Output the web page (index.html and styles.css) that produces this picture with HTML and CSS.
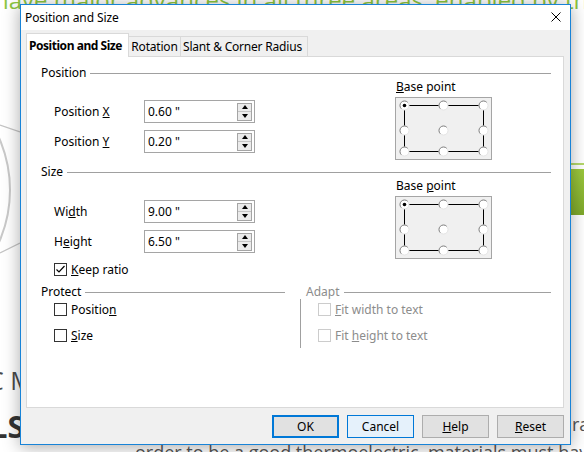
FILE: index.html
```html
<!DOCTYPE html>
<html>
<head>
<meta charset="utf-8">
<title>Position and Size</title>
<link rel="stylesheet" href="styles.css">
</head>
<body>
<div class="page">
  <p class="page-lead">have major advances in all three areas, enabled by the</p>
  <div class="page-mid">
    <svg class="page-figure" width="20" height="150" viewBox="0 0 20 150">
      <circle cx="-120" cy="70" r="130" fill="none" stroke="#c9c9c9" stroke-width="2"/>
      <line x1="0" y1="5" x2="20" y2="12" stroke="#c4c4c4" stroke-width="1.2"/>
      <line x1="0" y1="133" x2="20" y2="123" stroke="#c4c4c4" stroke-width="1.2"/>
    </svg>
    <div class="page-photo"></div>
  </div>
  <p class="page-h2">C M</p>
  <div class="page-row">
    <span class="page-h1">LS</span>
    <span class="page-side">rat</span>
  </div>
  <p class="page-body">order to be a good thermoelectric, materials must have the unique</p>
</div>

<div class="dialog">
  <div class="titlebar">
    <span class="title">Position and Size</span>
    <svg class="close" width="10" height="10" viewBox="0 0 10 10">
      <path d="M0.5 0.5 L9.5 9.5 M9.5 0.5 L0.5 9.5" stroke="#000" stroke-width="1" fill="none"/>
    </svg>
  </div>
  <div class="dlg-body">
    <div class="tabs">
      <div class="tab active">Position and Size</div>
      <div class="tab tab-rot">Rotation</div>
      <div class="tab tab-slant">Slant &amp; Corner Radius</div>
    </div>
    <div class="panel">
      <div class="section">
        <div class="sec-head"><span>Position</span><i class="rule"></i></div>
        <div class="sec-body">
          <div class="fields fields-1">
            <div class="field">
              <span class="lbl">Position <u>X</u></span>
              <div class="spin-input"><span class="val">0.60 "</span><span class="spin"><i class="up"></i><i class="down"></i></span></div>
            </div>
            <div class="field">
              <span class="lbl">Position <u>Y</u></span>
              <div class="spin-input"><span class="val">0.20 "</span><span class="spin"><i class="up"></i><i class="down"></i></span></div>
            </div>
          </div>
          <div class="basepoint">
            <div class="bp-label"><u>B</u>ase point</div>
            <div class="bp-box">
              <svg width="95" height="61" viewBox="0 0 95 61">
                <defs>
                  <g id="radio">
                    <circle cx="0" cy="0" r="4.5" fill="#fff" stroke="#e4e4e4" stroke-width="1"/>
                    <path d="M3.2 -3.2 A4.5 4.5 0 0 0 -3.2 3.2" fill="none" stroke="#858585" stroke-width="1"/>
                  </g>
                </defs>
                <path d="M8.5 7.5 H87.5 V53.5 H8.5 Z" fill="none" stroke="#000" stroke-width="1"/>
                <use href="#radio" x="8.5" y="7.5"/>
                <use href="#radio" x="47.5" y="7.5"/>
                <use href="#radio" x="87.5" y="7.5"/>
                <use href="#radio" x="8.5" y="32.5"/>
                <use href="#radio" x="47.5" y="32.5"/>
                <use href="#radio" x="87.5" y="32.5"/>
                <use href="#radio" x="8.5" y="53.5"/>
                <use href="#radio" x="47.5" y="53.5"/>
                <use href="#radio" x="87.5" y="53.5"/>
                <circle cx="8.5" cy="7.5" r="1.8" fill="#000"/>
              </svg>
            </div>
          </div>
        </div>
      </div>

      <div class="section section-2">
        <div class="sec-head"><span>Size</span><i class="rule"></i></div>
        <div class="sec-body">
          <div class="fields fields-2">
            <div class="field">
              <span class="lbl">Wi<u>d</u>th</span>
              <div class="spin-input"><span class="val">9.00 "</span><span class="spin"><i class="up"></i><i class="down"></i></span></div>
            </div>
            <div class="field">
              <span class="lbl">H<u>e</u>ight</span>
              <div class="spin-input"><span class="val">6.50 "</span><span class="spin"><i class="up"></i><i class="down"></i></span></div>
            </div>
            <div class="check keep">
              <span class="box">
                <svg width="11" height="11" viewBox="0 0 11 11"><path d="M1.5 5.5 L4 8 L9.5 2" fill="none" stroke="#000" stroke-width="1.2"/></svg>
              </span>
              <span class="clbl"><u>K</u>eep ratio</span>
            </div>
          </div>
          <div class="basepoint">
            <div class="bp-label">Base <u>p</u>oint</div>
            <div class="bp-box">
              <svg width="95" height="61" viewBox="0 0 95 61">
                <path d="M8.5 7.5 H87.5 V53.5 H8.5 Z" fill="none" stroke="#000" stroke-width="1"/>
                <use href="#radio" x="8.5" y="7.5"/>
                <use href="#radio" x="47.5" y="7.5"/>
                <use href="#radio" x="87.5" y="7.5"/>
                <use href="#radio" x="8.5" y="32.5"/>
                <use href="#radio" x="47.5" y="32.5"/>
                <use href="#radio" x="87.5" y="32.5"/>
                <use href="#radio" x="8.5" y="53.5"/>
                <use href="#radio" x="47.5" y="53.5"/>
                <use href="#radio" x="87.5" y="53.5"/>
                <circle cx="8.5" cy="7.5" r="1.8" fill="#000"/>
              </svg>
            </div>
          </div>
        </div>
      </div>

      <div class="section-3">
        <div class="protect">
          <div class="sec-head"><span>Protect</span><i class="rule"></i></div>
          <div class="checks">
            <div class="check"><span class="box"></span><span class="clbl">Positio<u>n</u></span></div>
            <div class="check"><span class="box"></span><span class="clbl"><u>S</u>ize</span></div>
          </div>
        </div>
        <div class="adapt">
          <div class="sec-head disabled"><span>Adapt</span><i class="rule"></i></div>
          <div class="checks adapt-body">
            <div class="check disabled"><span class="box"></span><span class="clbl"><u>F</u>it width to text</span></div>
            <div class="check disabled"><span class="box"></span><span class="clbl">Fit <u>h</u>eight to text</span></div>
          </div>
        </div>
      </div>
    </div>
    <div class="buttons">
      <button class="btn btn-default">OK</button>
      <button class="btn btn-hover">Cancel</button>
      <button class="btn"><u>H</u>elp</button>
      <button class="btn"><u>R</u>eset</button>
    </div>
  </div>
</div>
</body>
</html>
```

FILE: styles.css
```css
* { box-sizing: border-box; }

body {
  margin: 0;
  width: 584px;
  height: 452px;
  overflow: hidden;
  position: relative;
  background: #fff;
  font-family: "Noto Sans", "Open Sans", sans-serif;
  font-size: 12px;
  color: #000;
}

/* ---------- background page ---------- */
.page {
  width: 584px;
  height: 452px;
  overflow: hidden;
}
.page p { margin: 0; }

.page-lead {
  margin: -12px 0 0 -6px !important;
  font: 24px/24px "Open Sans", sans-serif;
  color: #8dc63f;
  white-space: nowrap;
}

.page-mid {
  display: flex;
  justify-content: space-between;
  align-items: flex-start;
  margin-top: 108px;
  height: 150px;
}
.page-figure { display: block; }
.page-photo {
  width: 13px;
  height: 52px;
  margin-top: 43px;
  background: linear-gradient(#b5d86a 0 2px, #fff 2px 6px, #9cc83d 6px, #7ea82b);
}

.page-h2 {
  margin: 95px 0 0 -12px !important;
  font: 25px/30px "Open Sans", sans-serif;
  color: #4a4a4a;
  white-space: nowrap;
}

.page-row {
  display: flex;
  justify-content: space-between;
  align-items: flex-start;
  height: 36px;
  margin-top: 13px;
}
.page-h1 {
  margin-left: -10px;
  font: bold 31px/36px "Open Sans", sans-serif;
  color: #333;
}
.page-side {
  width: 12px;
  margin-top: 5px;
  font: 18px/22px "Open Sans", sans-serif;
  color: #555;
  white-space: nowrap;
}

.page-body {
  margin: -3px 0 0 135px !important;
  font: 18px/22px "Open Sans", sans-serif;
  color: #555;
  white-space: nowrap;
}

/* ---------- dialog ---------- */
.dialog {
  position: absolute;
  left: 20px;
  top: 4px;
  width: 551px;
  height: 441px;
  border: 1px solid #1883d7;
  background: #f0f0f0;
  display: flex;
  flex-direction: column;
  box-shadow: 0 2px 16px rgba(0, 0, 0, 0.34);
}

.titlebar {
  height: 25px;
  flex: none;
  background: #fff;
  display: flex;
  align-items: center;
  justify-content: space-between;
  padding: 0 9px 0 4px;
}
.title { font-size: 12px; line-height: 16px; letter-spacing: -0.1px; }
.close { display: block; margin-top: -2px; }

.dlg-body {
  flex: 1;
  display: flex;
  flex-direction: column;
  padding: 3px 6px 6px 5px;
}

.tabs {
  display: flex;
  align-items: flex-end;
  height: 23px;
  flex: none;
  position: relative;
  z-index: 1;
}
.tab {
  height: 20px;
  border: 1px solid #d9d9d9;
  border-bottom: none;
  background: #f0f0f0;
  display: flex;
  align-items: center;
  justify-content: center;
  white-space: nowrap;
  margin-left: -1px;
  letter-spacing: -0.2px;
}
.tab.active {
  height: 24px;
  margin-bottom: -1px;
  margin-left: 0;
  width: 103px;
  background: #fff;
  font-weight: bold;
  letter-spacing: -0.45px;
  padding: 0 4px 1px 0;
}
.tab-rot { width: 53px; }
.tab-slant { width: 128px; padding-right: 3px; }

.panel {
  height: 352px;
  flex: none;
  background: #fff;
  border: 1px solid #d9d9d9;
  padding: 9px 12px 0 14px;
}

.sec-head {
  display: flex;
  align-items: center;
  height: 14px;
  gap: 4px;
  line-height: 14px;
}
.sec-head .rule {
  flex: 1;
  height: 1px;
  background: #a0a0a0;
  margin-top: 1px;
}
.sec-head.disabled { color: #8c8c8c; padding-left: 6px; }

.sec-body { display: flex; }
.section-2 { margin-top: 5px; }

.fields {
  width: 354px;
  padding-left: 13px;
  display: flex;
  flex-direction: column;
  gap: 7px;
}
.fields-1 { padding-top: 20px; }
.fields-2 { padding-top: 21px; }

.field {
  display: flex;
  align-items: center;
  height: 23px;
}
.lbl { width: 90px; line-height: 16px; }

.spin-input {
  width: 111px;
  height: 23px;
  border: 1px solid #a5a5a5;
  background: #fff;
  display: flex;
  align-items: center;
  padding: 0 2px 0 3px;
}
.val { flex: 1; line-height: 16px; }
.spin {
  width: 15px;
  height: 18px;
  border: 1px solid #a5a5a5;
  background: #ebebeb;
  display: flex;
  flex-direction: column;
}
.spin i {
  flex: 1;
  display: flex;
  align-items: center;
  justify-content: center;
}
.spin i.up { border-bottom: 1px solid #c4c4c4; }
.spin i::after {
  content: "";
  width: 0;
  height: 0;
  border-left: 3.5px solid transparent;
  border-right: 3.5px solid transparent;
}
.spin i.up::after { border-bottom: 4px solid #000; }
.spin i.down::after { border-top: 4px solid #000; }

.basepoint { display: flex; flex-direction: column; }
.bp-label { line-height: 14px; height: 14px; padding-left: 1px; }
.bp-box {
  margin-top: 3px;
  width: 97px;
  height: 63px;
  border: 1px solid #a5a5a5;
  background: #f0f0f0;
}
.bp-box svg { display: block; }

.check {
  display: flex;
  align-items: center;
  height: 13px;
  gap: 4px;
}
.check.keep { margin-top: 3px; }
.check .box {
  width: 13px;
  height: 13px;
  border: 1px solid #333;
  background: #fff;
  display: flex;
  align-items: center;
  justify-content: center;
  flex: none;
}
.check .box svg { display: block; }
.clbl { line-height: 16px; white-space: nowrap; }
.check.disabled .box { border-color: #cccccc; }
.check.disabled .clbl { color: #8c8c8c; }

.section-3 {
  display: flex;
  gap: 15px;
  margin-top: 9px;
}
.protect { width: 244px; }
.adapt { flex: 1; }

.checks {
  display: flex;
  flex-direction: column;
  gap: 13px;
  padding-top: 4px;
  padding-left: 13px;
}
.adapt-body {
  border-left: 1px solid #a0a0a0;
  padding-left: 17px;
  padding-bottom: 6px;
}

.buttons {
  margin-top: 7px;
  height: 23px;
  display: flex;
  justify-content: flex-end;
  gap: 8px;
}
.btn {
  width: 67px;
  height: 23px;
  border: 1px solid #adadad;
  background: #e1e1e1;
  font-family: "Noto Sans", "Open Sans", sans-serif;
  font-size: 12px;
  color: #000;
  padding: 0;
  margin: 0;
  line-height: 16px;
}
.btn-default { border: 2px solid #0078d7; }
.btn-hover { background: #e5f1fb; border-color: #0078d7; }
```
